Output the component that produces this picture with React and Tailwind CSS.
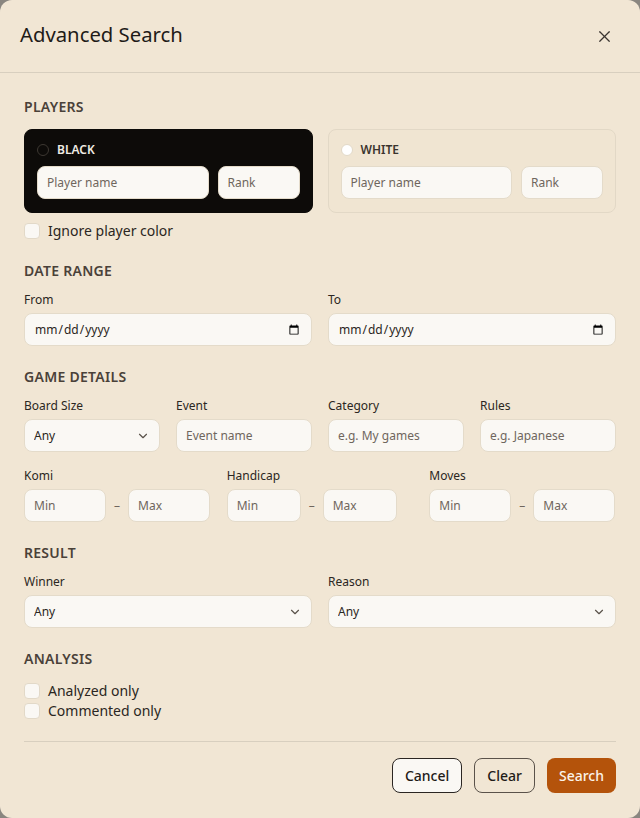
import React from "react";
import { X, ChevronDown } from "lucide-react";

const inputCls =
  "block h-[33px] w-full rounded-lg border border-[#e4dbca] bg-[#faf8f4] px-[9px] text-[12px] text-[#2b2622] placeholder:text-[#6f665d] outline-none";

function Label({ children }) {
  return <div className="mb-[5px] text-[12px] leading-[16px] text-[#2b2622]">{children}</div>;
}

function Section({ title, children, className = "", mb = "mb-[12px]" }) {
  return (
    <div className={className}>
      <div className={"text-[14px] font-semibold uppercase leading-[18px] tracking-[0.02em] text-[#4a4139] " + mb}>
        {title}
      </div>
      {children}
    </div>
  );
}

function Select({ value = "Any" }) {
  return (
    <div className="relative">
      <select className={inputCls + " appearance-none pr-8"} defaultValue={value}>
        <option>{value}</option>
      </select>
      <ChevronDown
        size={14}
        strokeWidth={2}
        className="pointer-events-none absolute right-[10px] top-1/2 -translate-y-1/2 text-[#5a524a]"
      />
    </div>
  );
}

function Check({ label }) {
  return (
    <label className="flex h-[20px] items-center gap-[8px] text-[14px] leading-[20px] text-[#2b2622]">
      <span className="h-[16px] w-[16px] rounded-[4px] border border-[#e2d9c8] bg-[#faf8f4]" />
      {label}
    </label>
  );
}

function Range({ label, inputW }) {
  return (
    <div>
      <Label>{label}</Label>
      <div className="flex items-center">
        <input className={inputCls + " " + inputW} placeholder="Min" />
        <span className="mx-[8px] text-[12px] text-[#6f665d]">–</span>
        <input className={inputCls + " " + inputW} placeholder="Max" />
      </div>
    </div>
  );
}

function PlayerCard({ dark }) {
  return (
    <div
      className={
        dark
          ? "rounded-lg border border-[#0d0b09] bg-[#0d0b09] px-[12px] pb-[13px] pt-[12px]"
          : "rounded-lg border border-[#e2d8c6] bg-[#f0e5d2] px-[12px] pb-[13px] pt-[12px]"
      }
    >
      <div className="mb-[8px] flex h-[16px] items-center gap-[8px]">
        <span
          className={
            dark
              ? "h-[12px] w-[12px] rounded-full border border-[#3d3832] bg-[#0d0b09]"
              : "h-[12px] w-[12px] rounded-full border border-[#e2d9c8] bg-[#ffffff]"
          }
        />
        <span
          className={
            dark
              ? "text-[12px] font-semibold leading-[16px] text-[#f0ebe4]"
              : "text-[12px] font-semibold leading-[16px] text-[#3a342e]"
          }
        >
          {dark ? "BLACK" : "WHITE"}
        </span>
      </div>
      <div className="flex gap-[9px]">
        <input className={inputCls + " flex-1"} placeholder="Player name" />
        <input className={inputCls + " !w-[82px] shrink-0"} placeholder="Rank" />
      </div>
    </div>
  );
}

export default function App() {
  return (
    <div className="h-[818px] w-[640px] bg-[#8a8680]" style={{ fontFamily: '"Noto Sans", sans-serif' }}>
      <div className="flex h-[818px] w-[640px] flex-col overflow-hidden rounded-[12px] bg-[#f1e6d4]">
        <div className="flex h-[73px] shrink-0 items-center justify-between border-b border-[#d8cfbf] pl-[20px] pr-[26px]">
          <h1 className="pb-[4px] text-[20.3px] font-normal text-[#1f1b18]">Advanced Search</h1>
          <X size={19} strokeWidth={1.5} className="text-[#3a3430]" />
        </div>

        <div className="flex flex-col px-[24px] pt-[25px]">
          <Section title="Players" mb="mb-[13px]">
            <div className="grid grid-cols-2 gap-[15px]">
              <PlayerCard dark />
              <PlayerCard />
            </div>
            <div className="mt-[8px]">
              <Check label="Ignore player color" />
            </div>
          </Section>

          <Section title="Date Range" className="mt-[21px]">
            <div className="grid grid-cols-2 gap-[16px]">
              <div>
                <Label>From</Label>
                <input type="date" className={inputCls} />
              </div>
              <div>
                <Label>To</Label>
                <input type="date" className={inputCls} />
              </div>
            </div>
          </Section>

          <Section title="Game Details" className="mt-[22px]">
            <div className="grid grid-cols-4 gap-[16px]">
              <div>
                <Label>Board Size</Label>
                <Select />
              </div>
              <div>
                <Label>Event</Label>
                <input className={inputCls} placeholder="Event name" />
              </div>
              <div>
                <Label>Category</Label>
                <input className={inputCls} placeholder="e.g. My games" />
              </div>
              <div>
                <Label>Rules</Label>
                <input className={inputCls} placeholder="e.g. Japanese" />
              </div>
            </div>
            <div className="mt-[16px] grid grid-cols-3 gap-[16px]">
              <Range label="Komi" inputW="!w-[82px]" />
              <Range label="Handicap" inputW="!w-[74px]" />
              <Range label="Moves" inputW="!w-[82px]" />
            </div>
          </Section>

          <Section title="Result" className="mt-[22px]">
            <div className="grid grid-cols-2 gap-[16px]">
              <div>
                <Label>Winner</Label>
                <Select />
              </div>
              <div>
                <Label>Reason</Label>
                <Select />
              </div>
            </div>
          </Section>

          <Section title="Analysis" className="mt-[22px]" mb="mb-[13px]">
            <div className="flex flex-col">
              <Check label="Analyzed only" />
              <Check label="Commented only" />
            </div>
          </Section>

          <div className="mt-[20px] border-t border-[#d8cfbf]" />

          <div className="flex justify-end gap-[12px] pt-[16px]">
            <button className="h-[35px] rounded-lg border border-[#2b2622] bg-[#faf8f4] px-[12px] text-[14px] font-medium text-[#1f1b18]">
              Cancel
            </button>
            <button className="h-[35px] rounded-lg border border-[#5a524a] bg-transparent px-[12px] text-[14px] font-medium text-[#1f1b18]">
              Clear
            </button>
            <button className="h-[35px] rounded-lg bg-[#b4530b] px-[12px] text-[14px] font-medium text-[#fbf3ea]">
              Search
            </button>
          </div>
        </div>
      </div>
    </div>
  );
}
